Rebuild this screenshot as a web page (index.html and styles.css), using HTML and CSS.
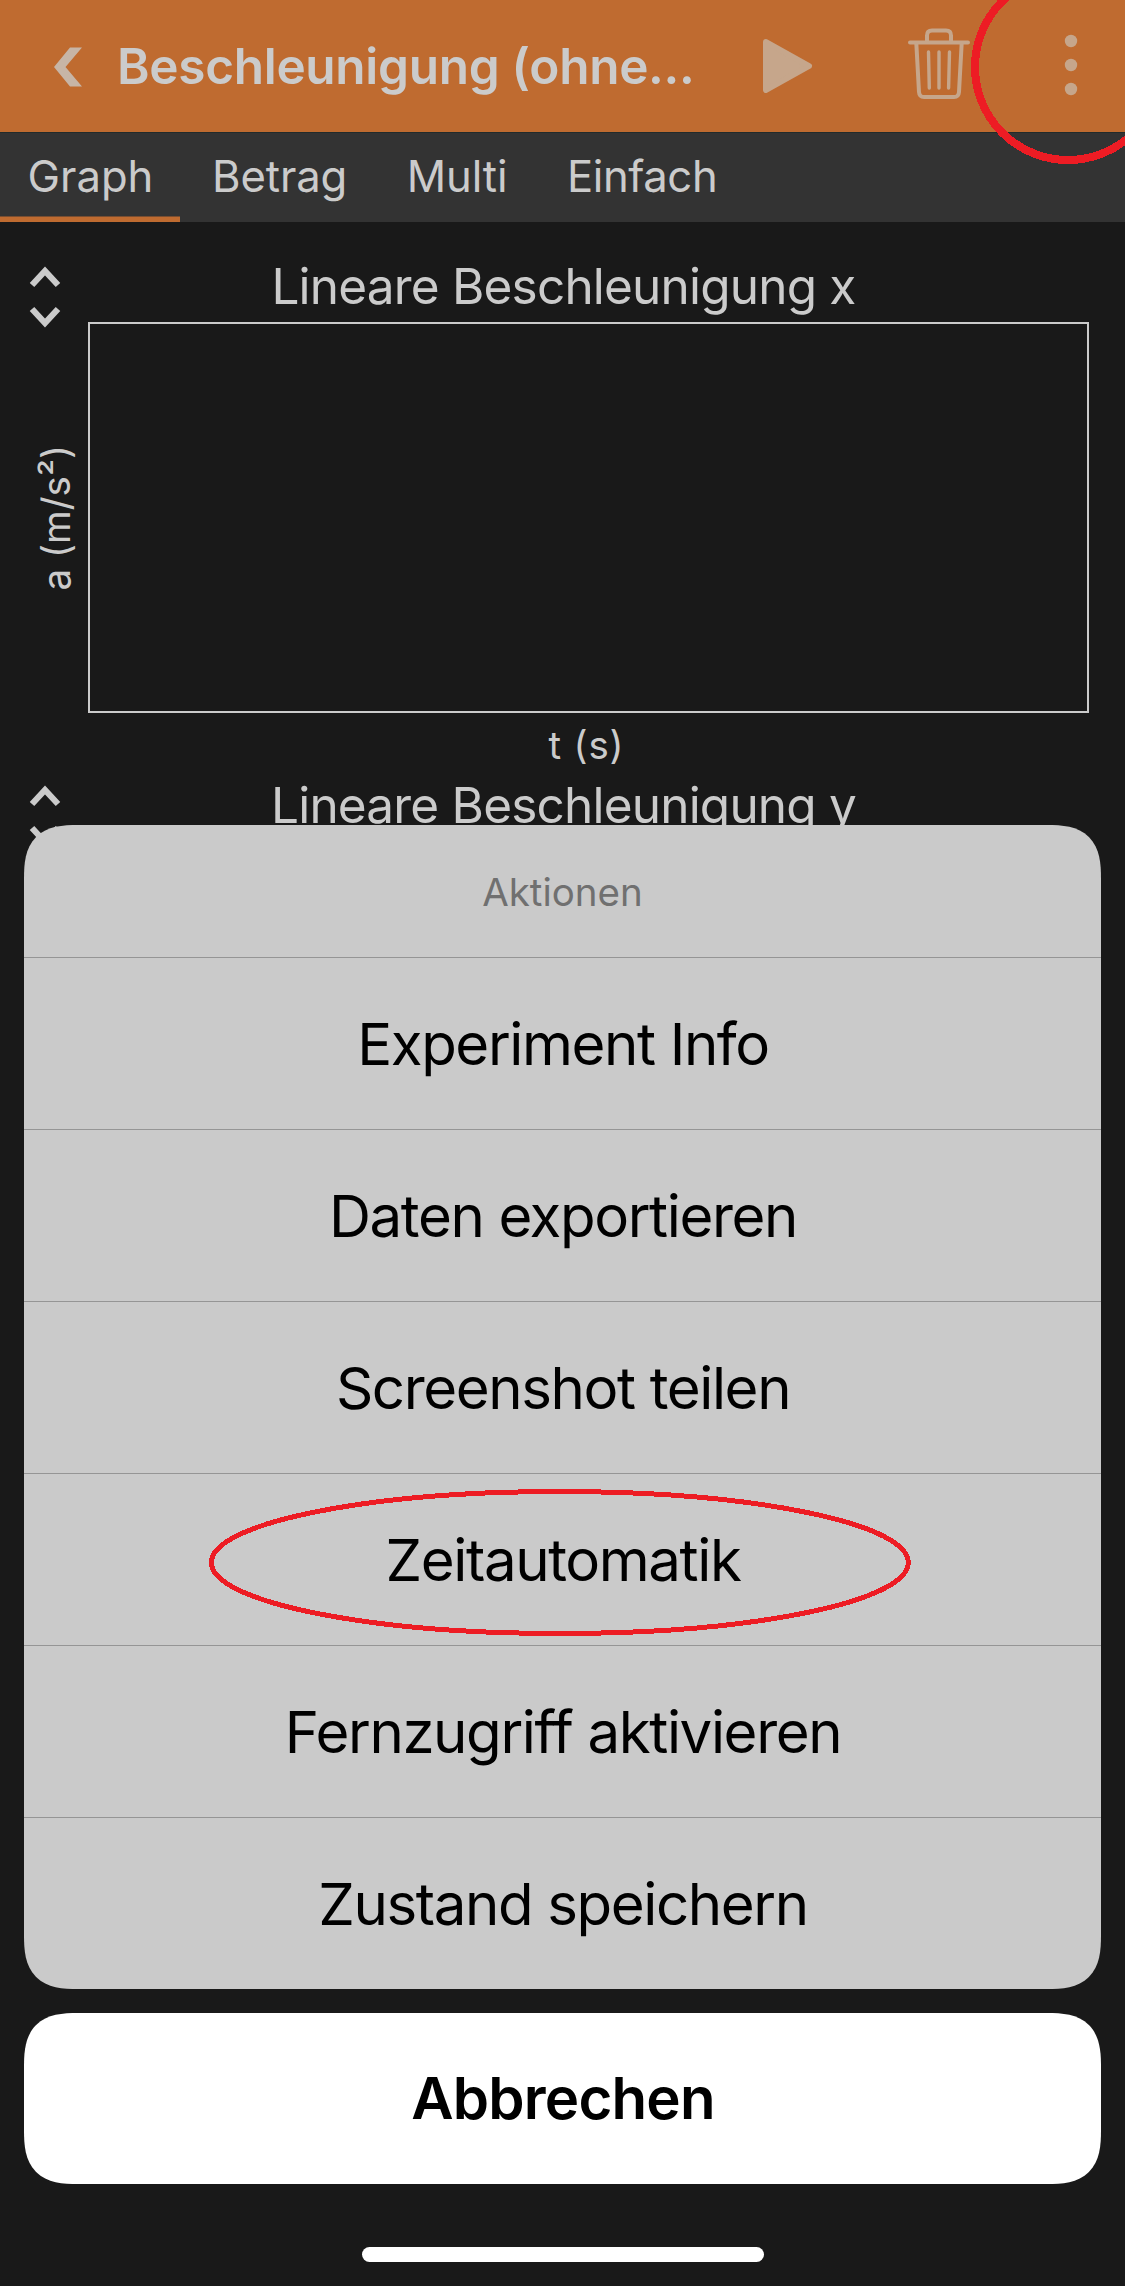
FILE: index.html
```html
<!DOCTYPE html>
<html lang="de">
<head>
<meta charset="utf-8">
<title>Beschleunigung (ohne g)</title>
<link rel="stylesheet" href="styles.css">
</head>
<body>
<div class="screen">
  <header class="navbar">
    <svg class="icon-back" width="28" height="40" viewBox="0 0 28 40"><path d="M16 .5H28L11.500 20 28 39.500H16L0 20Z"/></svg>
    <h1 class="title"><span>Beschleunigung (ohne...</span></h1>
    <svg class="icon-play" width="50" height="54" viewBox="0 0 50 54"><path d="M3 3 46 27 3 51Z"/></svg>
    <svg class="icon-trash" width="62" height="72" viewBox="0 0 62 72"><path d="M2 14.500H60M19 14V7.500Q19 2.500 24 2.500H38Q43 2.500 43 7.500V14M8.300 15 11 64Q11.300 69 16 69H46Q50.700 69 51 64L53.700 15"/><path class="thin" d="M20.500 24 21.300 60M31 24V60M41.500 24 40.600 60"/></svg>
    <svg class="icon-more" width="14" height="62" viewBox="0 0 14 62"><circle cx="7" cy="7" r="6.200"/><circle cx="7" cy="31" r="6.200"/><circle cx="7" cy="55" r="6.200"/></svg>
  </header>
  <nav class="tabs">
    <a class="tab active"><span>Graph</span></a>
    <a class="tab"><span>Betrag</span></a>
    <a class="tab"><span>Multi</span></a>
    <a class="tab"><span>Einfach</span></a>
  </nav>
  <main class="content">
    <section class="graph">
      <svg class="expand" width="32" height="62" viewBox="0 0 32 62"><path d="M3 19 16 5 29 19M3 43 16 57 29 43"/></svg>
      <h2 class="graph-title"><span>Lineare Beschleunigung x</span></h2>
      <div class="y-label"><span>a (m/s²)</span></div>
      <div class="plot"></div>
      <div class="x-label"><span>t (s)</span></div>
    </section>
    <section class="graph">
      <svg class="expand" width="32" height="62" viewBox="0 0 32 62"><path d="M3 19 16 5 29 19M3 43 16 57 29 43"/></svg>
      <h2 class="graph-title"><span>Lineare Beschleunigung y</span></h2>
    </section>
  </main>
  <div class="overlay">
    <div class="sheet">
      <div class="sheet-title"><span>Aktionen</span></div>
      <div class="action"><span>Experiment Info</span></div>
      <div class="action"><span>Daten exportieren</span></div>
      <div class="action"><span>Screenshot teilen</span></div>
      <div class="action"><span>Zeitautomatik</span></div>
      <div class="action"><span>Fernzugriff aktivieren</span></div>
      <div class="action"><span>Zustand speichern</span></div>
    </div>
    <div class="cancel"><span>Abbrechen</span></div>
    <div class="home"></div>
  </div>
  <svg class="marks" width="1125" height="2286" viewBox="0 0 1125 2286"><circle cx="1068" cy="67" r="93" stroke-width="8"/><ellipse cx="559.800" cy="1562.500" rx="348.500" ry="71" stroke-width="5"/></svg>
</div>
</body>
</html>
```
FILE: styles.css
```css
* { box-sizing: border-box; }
body { margin: 0; background: #191919; font-family: Inter, "Liberation Sans", sans-serif; color: #cbcbcb; }
h1, h2 { margin: 0; font-weight: 400; }
svg { display: block; flex: none; }
span { white-space: nowrap; }
.screen { position: relative; width: 1125px; height: 2286px; overflow: hidden; background: #191919; }

.navbar { display: flex; align-items: flex-start; height: 133px; padding-left: 53.500px; background: #bf6b30; border-bottom: 1px solid #222b2b; }
.navbar svg { fill: #c6a68b; }
.navbar .icon-back { margin-top: 47px; fill: #c7b5a6; }
.title { width: 604px; margin: 32px 0 0 34px; padding-left: 1.500px; font-size: 49.500px; line-height: 68px; font-weight: 600; letter-spacing: -.3px; }
.icon-play { margin: 39px 0 0 43.500px; stroke: #c6a68b; stroke-width: 6; stroke-linejoin: round; }
.navbar .icon-trash { margin: 27.500px 0 0 95px; fill: none; stroke: #c6a68b; stroke-width: 4; stroke-linecap: round; }
.icon-trash .thin { stroke-width: 3.400; }
.icon-more { margin: 34px 0 0 94px; }

.tabs { display: flex; height: 89px; background: #333; }
.tab { display: flex; padding: 0 27.500px 0 32px; font-size: 43.600px; line-height: 88px; letter-spacing: -.1px; }
.tab.active { width: 180px; padding: 0 0 0 27.500px; letter-spacing: 0; box-shadow: inset 0 -5.500px #bf6b30; }
.tab:last-child { letter-spacing: -.4px; }

.graph { display: grid; grid-template-columns: 88px 1001px; grid-template-rows: 100px 391px 28.330px; height: 519.330px; }
.content .expand { grid-area: 1 / 1; margin: 44px 0 0 29px; fill: none; stroke: #cbcbcb; stroke-width: 6.200; }
.graph-title { grid-area: 1 / 1 / 2 / 3; width: 1127px; padding-top: 34px; text-align: center; font-size: 49.500px; line-height: 60px; letter-spacing: -.8px; }
.y-label { grid-area: 2 / 1; display: flex; align-items: center; justify-content: center; font-size: 38.500px; padding: 1px 0 0 24px; }
.y-label span { writing-mode: vertical-rl; transform: rotate(180deg); }
.plot { grid-area: 2 / 2; border: 2px solid #cbcbcb; }
.x-label { grid-area: 3 / 2; text-align: center; padding-right: 4px; padding-top: 9px; font-size: 38.500px; line-height: 46px; letter-spacing: .8px; }

.overlay { position: absolute; left: 24px; top: 825px; width: 1077px; display: flex; flex-direction: column; align-items: center; color: #000; }
.sheet, .cancel { width: 100%; border-radius: 41px; }
.sheet { height: 1164px; background: #cacaca; overflow: hidden; }
.sheet-title { height: 132px; line-height: 134px; text-align: center; font-size: 38.500px; color: #707070; }
.action { height: 172px; padding-left: 1px; border-top: 1px solid #959595; text-align: center; font-size: 58.200px; line-height: 172px; letter-spacing: -1.400px; }
.cancel { height: 171px; margin-top: 24px; padding-left: 1px; background: #fff; text-align: center; font-size: 58.200px; line-height: 171px; font-weight: 600; letter-spacing: -.8px; }
.home { width: 402px; height: 15px; margin-top: 63px; border-radius: 7.500px; background: #fff; }
.marks { position: absolute; left: 0; top: 0; fill: none; stroke: #ed1c24; shape-rendering: crispEdges; pointer-events: none; }

/* Continuous corners where the browser can draw them */
@supports (corner-shape: superellipse(1.45)) {
  .sheet, .cancel { border-radius: 54px; corner-shape: superellipse(1.45); }
}
```
